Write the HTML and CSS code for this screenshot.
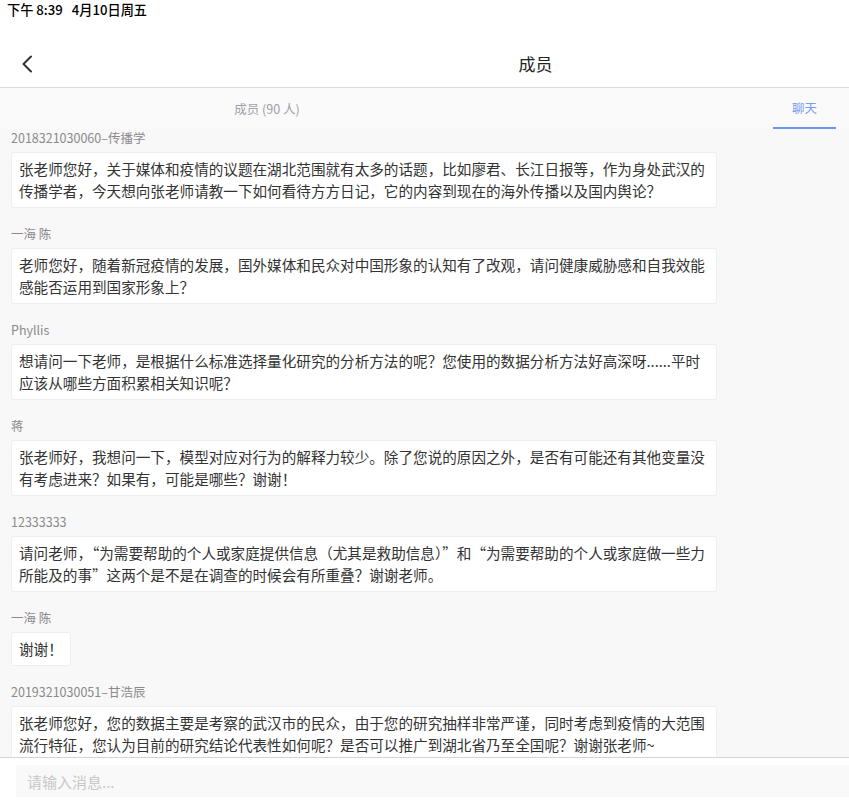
FILE: index.html
```html
<!DOCTYPE html>
<html lang="zh-CN">
<head>
  <meta charset="UTF-8">
  <meta name="viewport" content="width=device-width, initial-scale=1.0">
  <title>成员</title>
  <link rel="stylesheet" href="styles.css">
</head>
<body>
  <div class="app">
    <div class="status-bar">下午 8:39&nbsp;&nbsp;&nbsp;4月10日周五</div>
    <div class="nav-bar">
      <button class="back-btn" aria-label="返回">
        <svg width="12" height="18" viewBox="0 0 12 18"><path d="M10 1.5 L2.5 9 L10 16.5" fill="none" stroke="#333" stroke-width="2" stroke-linecap="round" stroke-linejoin="round"/></svg>
      </button>
      <div class="nav-title">成员</div>
    </div>
    <div class="tabs">
      <div class="tab tab-members">成员 (90 人)</div>
      <div class="tab tab-chat active">聊天</div>
    </div>
    <div class="chat-list">
      <div class="msg">
        <div class="msg-name">2018321030060–传播学</div>
        <div class="msg-bubble">张老师您好，关于媒体和疫情的议题在湖北范围就有太多的话题，比如廖君、长江日报等，作为身处武汉的传播学者，今天想向张老师请教一下如何看待方方日记，它的内容到现在的海外传播以及国内舆论？</div>
      </div>
      <div class="msg">
        <div class="msg-name">一海 陈</div>
        <div class="msg-bubble">老师您好，随着新冠疫情的发展，国外媒体和民众对中国形象的认知有了改观，请问健康威胁感和自我效能感能否运用到国家形象上？</div>
      </div>
      <div class="msg">
        <div class="msg-name">Phyllis</div>
        <div class="msg-bubble">想请问一下老师，是根据什么标准选择量化研究的分析方法的呢？您使用的数据分析方法好高深呀......平时应该从哪些方面积累相关知识呢？</div>
      </div>
      <div class="msg">
        <div class="msg-name">蒋</div>
        <div class="msg-bubble">张老师好，我想问一下，模型对应对行为的解释力较少。除了您说的原因之外，是否有可能还有其他变量没有考虑进来？如果有，可能是哪些？谢谢！</div>
      </div>
      <div class="msg">
        <div class="msg-name">12333333</div>
        <div class="msg-bubble">请问老师，“为需要帮助的个人或家庭提供信息（尤其是救助信息）”和“为需要帮助的个人或家庭做一些力所能及的事”这两个是不是在调查的时候会有所重叠？谢谢老师。</div>
      </div>
      <div class="msg">
        <div class="msg-name">一海 陈</div>
        <div class="msg-bubble">谢谢！</div>
      </div>
      <div class="msg">
        <div class="msg-name">2019321030051–甘浩辰</div>
        <div class="msg-bubble">张老师您好，您的数据主要是考察的武汉市的民众，由于您的研究抽样非常严谨，同时考虑到疫情的大范围流行特征，您认为目前的研究结论代表性如何呢？是否可以推广到湖北省乃至全国呢？谢谢张老师~</div>
      </div>
    </div>
    <div class="composer">
      <input class="composer-input" type="text" placeholder="请输入消息...">
    </div>
  </div>
</body>
</html>
```

FILE: styles.css
```css
* { margin: 0; padding: 0; box-sizing: border-box; }
body {
  font-family: "Noto Sans CJK SC", "Noto Sans", sans-serif;
  background: #fff;
  color: #333;
}
.app {
  height: 805px;
  display: flex;
  flex-direction: column;
  overflow: hidden;
}
.status-bar {
  height: 20px;
  line-height: 20px;
  padding-left: 7px;
  font-size: 13.2px;
  font-weight: 500;
  color: #000;
  background: #fff;
}
.nav-bar {
  height: 68px;
  padding-top: 20px;
  display: flex;
  align-items: center;
  background: #fff;
  border-bottom: 1px solid #dcdcdc;
}
.back-btn {
  width: 54px;
  height: 47px;
  border: none;
  background: none;
  display: flex;
  align-items: center;
  justify-content: center;
}
.nav-title {
  flex: 1;
  padding-left: 168px;
  text-align: center;
  font-size: 17px;
  color: #222;
}
.tabs {
  height: 41px;
  display: flex;
  background: #fafafa;
  font-size: 12.5px;
}
.tab {
  display: flex;
  align-items: center;
  justify-content: center;
  color: #a0a0a8;
}
.tab-members { width: 534px; }
.tab-chat {
  width: 63px;
  margin-left: auto;
  margin-right: 13px;
}
.tab.active {
  color: #7a9cf0;
  border-bottom: 2px solid #6d95f5;
}
.chat-list {
  flex: 1;
  overflow: hidden;
  background: #f8f8f8;
  padding: 1px 0 0 11px;
}
.msg {
  margin-bottom: 18px;
}
.msg-name {
  font-size: 12.5px;
  line-height: 16px;
  color: #8a8a8a;
}
.msg-bubble {
  display: inline-block;
  max-width: 706px;
  margin-top: 6px;
  padding: 5px 7px;
  background: #fff;
  border: 1px solid #efefef;
  border-radius: 3px;
  font-size: 14.6px;
  line-height: 22px;
  color: #333;
}
.composer {
  height: 48px;
  padding: 7px 0 8px 16px;
  background: #fff;
  border-top: 1px solid #d4d4d4;
}
.composer-input {
  width: 100%;
  height: 32px;
  border: none;
  outline: none;
  background: #f9f9f9;
  padding-left: 11px;
  font-family: inherit;
  font-size: 15px;
  color: #333;
}
.composer-input::placeholder { color: #c8c8c8; }
```
